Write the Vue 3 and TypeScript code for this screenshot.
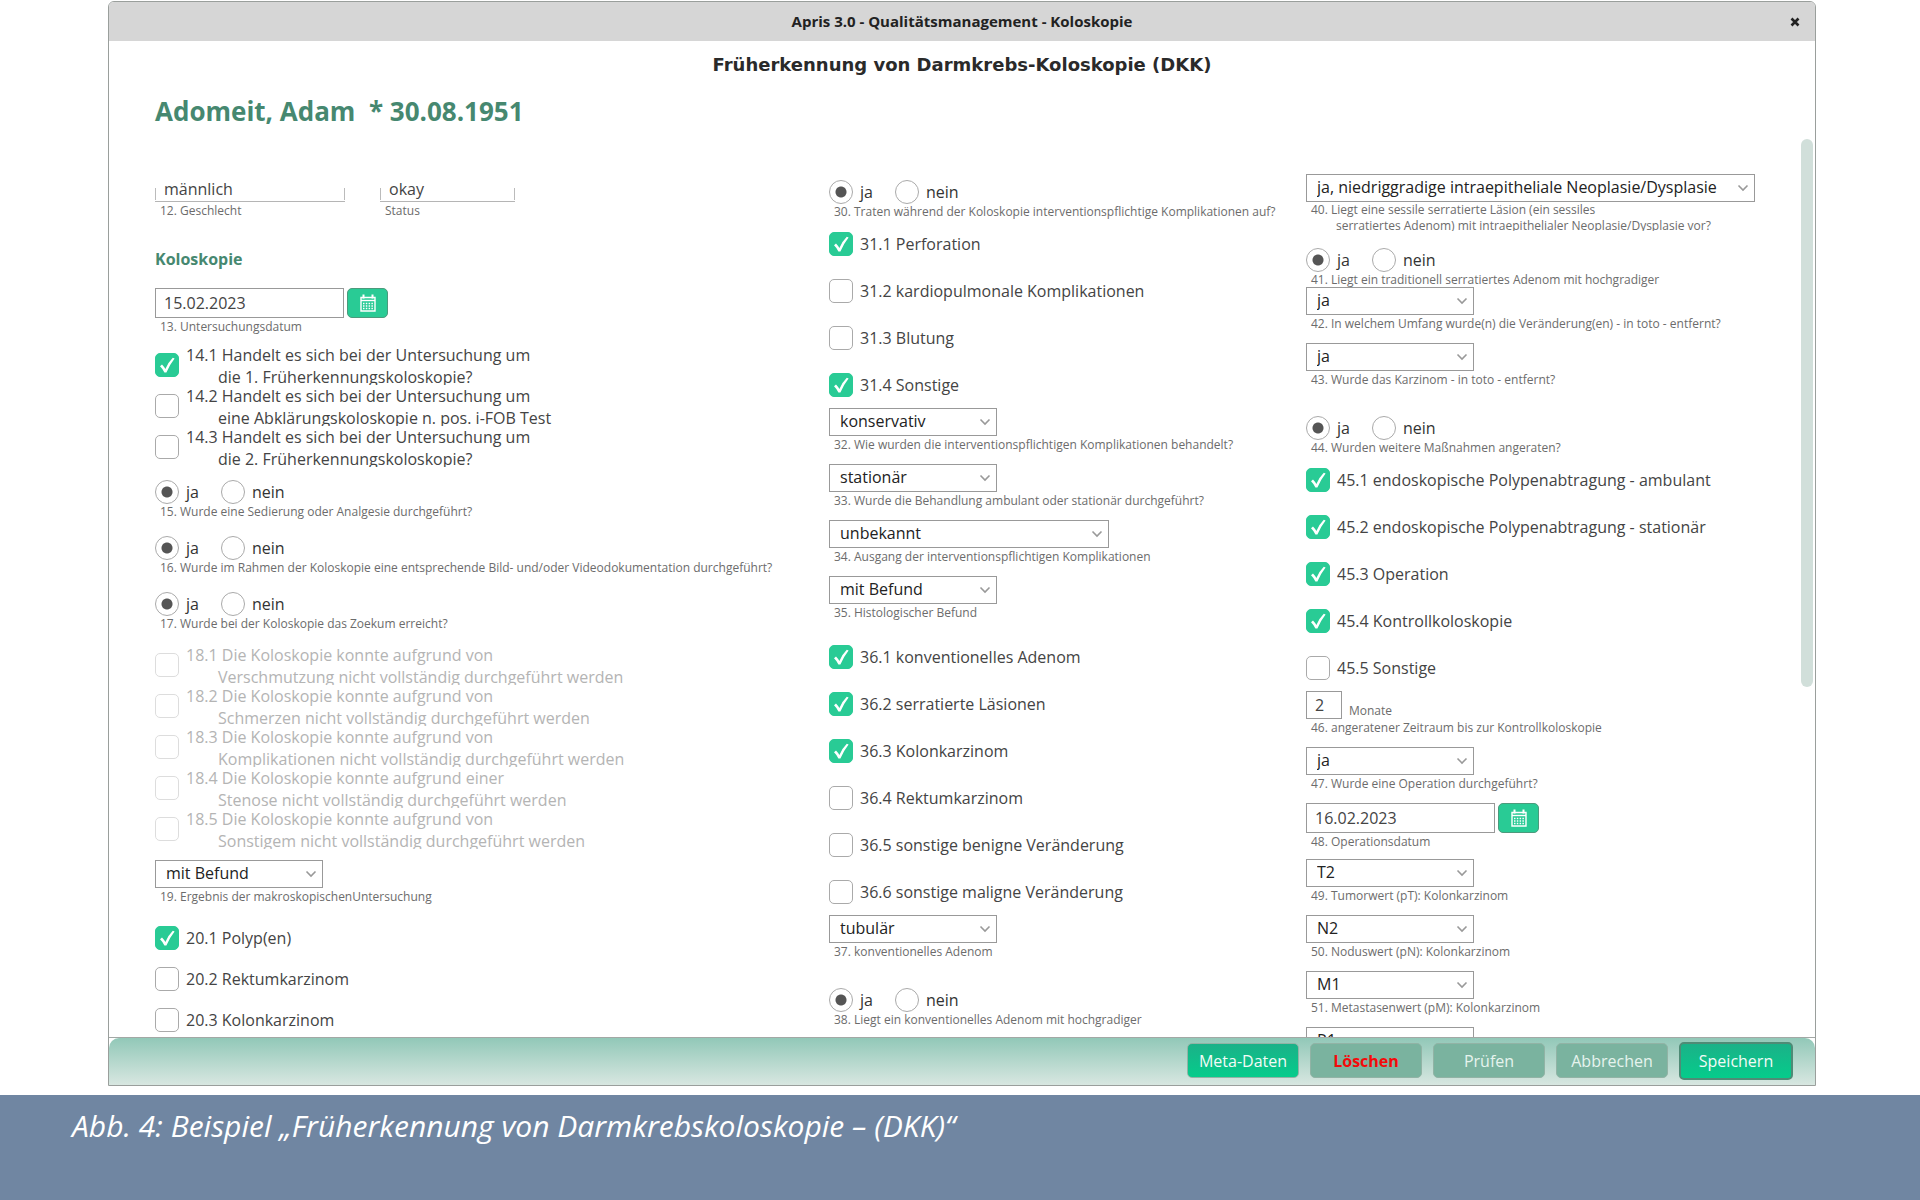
<script setup lang="ts">
import { reactive } from 'vue'

type Space = 'none' | 'xs' | 's' | 'm' | 'l' | 'xl' | '2xl' | '3xl' | '4xl'

interface Item {
  kind: 'status' | 'heading' | 'date' | 'check' | 'radio' | 'select' | 'number'
  id: string
  space: Space
  text?: string
  more?: string
  value?: string
  checked?: boolean
  disabled?: boolean
  size?: 'normal' | 'wide' | 'full'
}

const check = (id: string, space: Space, text: string, checked = false, more = '', disabled = false): Item => ({
  kind: 'check', id, space, text, checked, more, disabled,
})
const radio = (id: string, space: Space, text: string): Item => ({ kind: 'radio', id, space, text, value: 'ja' })
const select = (
  id: string, space: Space, value: string, text: string, size: Item['size'] = 'normal', more = '',
): Item => ({ kind: 'select', id, space, value, text, size, more })
const date = (id: string, space: Space, value: string, text: string): Item => ({ kind: 'date', id, space, value, text })

const columns = reactive<Item[][]>([
  [
    { kind: 'status', id: 'q12', space: 'xs' },
    { kind: 'heading', id: 'koloskopie', space: '4xl', text: 'Koloskopie' },
    date('q13', 'xl', '15.02.2023', '13. Untersuchungsdatum'),
    check('q14-1', 's', '14.1 Handelt es sich bei der Untersuchung um', true, 'die 1. Früherkennungskoloskopie?'),
    check('q14-2', 'none', '14.2 Handelt es sich bei der Untersuchung um', false, 'eine Abklärungskoloskopie n. pos. i-FOB Test'),
    check('q14-3', 'none', '14.3 Handelt es sich bei der Untersuchung um', false, 'die 2. Früherkennungskoloskopie?'),
    radio('q15', 'm', '15. Wurde eine Sedierung oder Analgesie durchgeführt?'),
    radio('q16', 'xl', '16. Wurde im Rahmen der Koloskopie eine entsprechende Bild- und/oder Videodokumentation durchgeführt?'),
    radio('q17', 'xl', '17. Wurde bei der Koloskopie das Zoekum erreicht?'),
    check('q18-1', 'm', '18.1 Die Koloskopie konnte aufgrund von', false, 'Verschmutzung nicht vollständig durchgeführt werden', true),
    check('q18-2', 'none', '18.2 Die Koloskopie konnte aufgrund von', false, 'Schmerzen nicht vollständig durchgeführt werden', true),
    check('q18-3', 'none', '18.3 Die Koloskopie konnte aufgrund von', false, 'Komplikationen nicht vollständig durchgeführt werden', true),
    check('q18-4', 'none', '18.4 Die Koloskopie konnte aufgrund einer', false, 'Stenose nicht vollständig durchgeführt werden', true),
    check('q18-5', 'none', '18.5 Die Koloskopie konnte aufgrund von', false, 'Sonstigem nicht vollständig durchgeführt werden', true),
    select('q19', 's', 'mit Befund', '19. Ergebnis der makroskopischenUntersuchung'),
    check('q20-1', '2xl', '20.1 Polyp(en)', true),
    check('q20-2', 'xl', '20.2 Rektumkarzinom'),
    check('q20-3', 'xl', '20.3 Kolonkarzinom'),
  ],
  [
    radio('q30', 'xs', '30. Traten während der Koloskopie interventionspflichtige Komplikationen auf?'),
    check('q31-1', 'm', '31.1 Perforation', true),
    check('q31-2', '2xl', '31.2 kardiopulmonale Komplikationen'),
    check('q31-3', '2xl', '31.3 Blutung'),
    check('q31-4', '2xl', '31.4 Sonstige', true),
    select('q32', 's', 'konservativ', '32. Wie wurden die interventionspflichtigen Komplikationen behandelt?'),
    select('q33', 'm', 'stationär', '33. Wurde die Behandlung ambulant oder stationär durchgeführt?'),
    select('q34', 'm', 'unbekannt', '34. Ausgang der interventionspflichtigen Komplikationen', 'wide'),
    select('q35', 'm', 'mit Befund', '35. Histologischer Befund'),
    check('q36-1', '3xl', '36.1 konventionelles Adenom', true),
    check('q36-2', '2xl', '36.2 serratierte Läsionen', true),
    check('q36-3', '2xl', '36.3 Kolonkarzinom', true),
    check('q36-4', '2xl', '36.4 Rektumkarzinom'),
    check('q36-5', '2xl', '36.5 sonstige benigne Veränderung'),
    check('q36-6', '2xl', '36.6 sonstige maligne Veränderung'),
    select('q37', 's', 'tubulär', '37. konventionelles Adenom'),
    radio('q38', '4xl', '38. Liegt ein konventionelles Adenom mit hochgradiger'),
  ],
  [
    select('q40', 'none', 'ja, niedriggradige intraepitheliale Neoplasie/Dysplasie', '40. Liegt eine sessile serratierte Läsion (ein sessiles', 'full', 'serratiertes Adenom) mit intraepithelialer Neoplasie/Dysplasie vor?'),
    radio('q41', 'xl', '41. Liegt ein traditionell serratiertes Adenom mit hochgradiger'),
    select('q42', 'none', 'ja', '42. In welchem Umfang wurde(n) die Veränderung(en) - in toto - entfernt?'),
    select('q43', 'm', 'ja', '43. Wurde das Karzinom - in toto - entfernt?'),
    radio('q44', '4xl', '44. Wurden weitere Maßnahmen angeraten?'),
    check('q45-1', 'm', '45.1 endoskopische Polypenabtragung - ambulant', true),
    check('q45-2', '2xl', '45.2 endoskopische Polypenabtragung - stationär', true),
    check('q45-3', '2xl', '45.3 Operation', true),
    check('q45-4', '2xl', '45.4 Kontrollkoloskopie', true),
    check('q45-5', '2xl', '45.5 Sonstige'),
    { kind: 'number', id: 'q46', space: 's', value: '2', text: '46. angeratener Zeitraum bis zur Kontrollkoloskopie' },
    select('q47', 'm', 'ja', '47. Wurde eine Operation durchgeführt?'),
    date('q48', 'm', '16.02.2023', '48. Operationsdatum'),
    select('q49', 's', 'T2', '49. Tumorwert (pT): Kolonkarzinom'),
    select('q50', 'm', 'N2', '50. Noduswert (pN): Kolonkarzinom'),
    select('q51', 'm', 'M1', '51. Metastasenwert (pM): Kolonkarzinom'),
    select('q52', 'm', 'R1', ''),
  ],
])
</script>

<template>
  <div class="page">
    <main class="window">
      <header class="titlebar">
        <span class="titlebar-text">Apris 3.0 - Qualitätsmanagement - Koloskopie</span>
        <button class="close" type="button" aria-label="Schließen">
          <svg width="10" height="10" viewBox="0 0 10 10"><path d="M1.500 1.500L8.500 8.500M8.500 1.500L1.500 8.500" stroke="#222" stroke-width="2.6" /></svg>
        </button>
      </header>

      <h1 class="title">Früherkennung von Darmkrebs-Koloskopie (DKK)</h1>
      <h2 class="patient">Adomeit, Adam&nbsp; * 30.08.1951</h2>

      <div class="scroll">
        <form class="columns" @submit.prevent>
          <div v-for="(column, c) in columns" :key="c" class="column">
            <div v-for="item in column" :key="item.id" :class="['item', 'space-' + item.space]">
              <div v-if="item.kind === 'status'" class="pair">
                <div class="field field-sex">
                  <input id="q12" class="line-input" type="text" value="männlich" />
                  <label class="caption" for="q12">12. Geschlecht</label>
                </div>
                <div class="field field-status">
                  <input id="status" class="line-input" type="text" value="okay" />
                  <label class="caption" for="status">Status</label>
                </div>
              </div>

              <h3 v-else-if="item.kind === 'heading'" class="section">{{ item.text }}</h3>

              <template v-else-if="item.kind === 'date'">
                <div class="date-row">
                  <input :id="item.id" v-model="item.value" class="text-input date-input" type="text" />
                  <button class="calendar" type="button" aria-label="Kalender öffnen">
                    <svg width="16" height="18" viewBox="0 0 16 18" fill="none" stroke="#fff">
                      <path d="M1 3.5H15V17H1Z" stroke-width="1.4" />
                      <path d="M1 6.5H15" stroke-width="1.4" />
                      <path d="M3.5 0.5V4.5M12.5 0.5V4.5" stroke-width="2" />
                      <path d="M3 9.5H13.5M3 12H13.5M3 14.5H13.5" stroke-width="1.3" stroke-dasharray="1.5 1.3" />
                    </svg>
                  </button>
                </div>
                <label class="caption" :for="item.id">{{ item.text }}</label>
              </template>

              <label
                v-else-if="item.kind === 'check'"
                :class="['check', { 'check-double': item.more, 'check-disabled': item.disabled }]"
              >
                <span class="box">
                  <input v-model="item.checked" type="checkbox" :disabled="item.disabled" />
                  <svg v-if="item.checked" class="tick" viewBox="0 0 24 24" fill="#fff">
                    <path d="M5 13.2L7 11.4Q9 13.4 10.4 16Q13 9.6 17.8 4.8L19.6 5.6Q14.6 12 11.4 19.6H9.4Q7.8 15.8 5 13.2Z" />
                  </svg>
                </span>
                <span class="check-text">
                  <span class="line">{{ item.text }}</span>
                  <span v-if="item.more" class="line line-indent">{{ item.more }}</span>
                </span>
              </label>

              <div v-else-if="item.kind === 'radio'" role="radiogroup" :aria-labelledby="item.id">
                <div class="radios">
                  <label class="radio"><input v-model="item.value" type="radio" :name="item.id" value="ja" />ja</label>
                  <label class="radio"><input v-model="item.value" type="radio" :name="item.id" value="nein" />nein</label>
                </div>
                <div :id="item.id" class="caption caption-tight">{{ item.text }}</div>
              </div>

              <template v-else-if="item.kind === 'select'">
                <div :class="['select', 'select-' + item.size]">
                  <select :id="item.id" v-model="item.value">
                    <option>{{ item.value }}</option>
                  </select>
                  <svg class="chevron" width="12" height="8" viewBox="0 0 12 8" fill="none">
                    <path d="M1.5 1.5L6 6L10.500 1.5" stroke="#999" stroke-width="1.6" />
                  </svg>
                </div>
                <label :class="['caption', { 'caption-double': item.more }]" :for="item.id">
                  <span class="line">{{ item.text }}</span>
                  <span v-if="item.more" class="line caption-indent">{{ item.more }}</span>
                </label>
              </template>

              <template v-else>
                <div class="number-row">
                  <input :id="item.id" v-model="item.value" class="text-input number-input" type="text" />
                  <span class="unit">Monate</span>
                </div>
                <label class="caption" :for="item.id">{{ item.text }}</label>
              </template>
            </div>
          </div>
        </form>
        <div class="scrollbar"><div class="thumb"></div></div>
      </div>

      <footer class="actions">
        <div class="actions-bar">
          <button class="btn btn-primary" type="button">Meta-Daten</button>
          <button class="btn btn-danger" type="button">Löschen</button>
          <button class="btn" type="button">Prüfen</button>
          <button class="btn" type="button">Abbrechen</button>
          <button class="btn btn-primary btn-default" type="button">Speichern</button>
        </div>
      </footer>
    </main>

    <p class="figure-caption">Abb. 4: Beispiel „Früherkennung von Darmkrebskoloskopie – (DKK)“</p>
  </div>
</template>

<style>
body {
  margin: 0;
  background: #fff;
}
</style>

<style scoped>
.page {
  display: flex;
  flex-direction: column;
  height: 100vh;
  box-sizing: border-box;
  padding-top: 1px;
  font-family: 'Open Sans', 'Noto Sans', sans-serif;
  font-size: 16px;
  color: #444;
}
.page *,
.page *::before {
  box-sizing: border-box;
}
h1, h2, h3, p {
  margin: 0;
}
button, input, select {
  font: inherit;
  margin: 0;
}

.window {
  flex: 1;
  min-height: 0;
  display: flex;
  flex-direction: column;
  margin: 0 104px 9px 108px;
  border: 1px solid #9a9f9c;
  border-radius: 6px 6px 0 0;
  background: #fff;
  overflow: hidden;
}
.titlebar {
  display: grid;
  grid-template-columns: 40px 1fr 40px;
  align-items: center;
  height: 39px;
  flex: none;
  background: #d6d6d6;
}
.titlebar-text {
  grid-column: 2;
  text-align: center;
  font-size: 15px;
  font-weight: 700;
  line-height: 38px;
  height: 39px;
  color: #222;
}
.close {
  display: grid;
  place-items: center;
  width: 40px;
  height: 38px;
  padding: 0;
  border: 0;
  background: none;
}

.title {
  margin-top: 11px;
  text-align: center;
  font-family: 'DejaVu Sans', sans-serif;
  font-size: 18px;
  line-height: 26px;
  color: #2a2a2a;
}
.patient {
  margin: 15px 0 10px 46px;
  font-size: 26px;
  line-height: 36px;
  color: #468870;
}

.scroll {
  flex: 1;
  min-height: 0;
  display: flex;
  overflow: hidden;
}
.columns {
  flex: 1;
  display: grid;
  grid-template-columns: 674fr 477fr 495fr;
  padding: 35px 0 0 46px;
}
.column {
  min-width: 0;
  white-space: nowrap;
}
.column > .item {
  display: flow-root;
}
.item.space-xs { margin-top: 6px; }
.item.space-s { margin-top: 11px; }
.item.space-m { margin-top: 13px; }
.item.space-l { margin-top: 15px; }
.item.space-xl { margin-top: 17px; }
.item.space-2xl { margin-top: 23px; }
.item.space-3xl { margin-top: 26px; }
.item.space-4xl { margin-top: 30px; }

.scrollbar {
  width: 14px;
  padding-right: 2px;
}
.thumb {
  height: 61%;
  border-radius: 6px;
  background: #d1dfda;
}

.caption {
  display: block;
  height: 15px;
  padding-left: 5px;
  font-size: 12px;
  line-height: 18px;
  color: #6c6c6c;
}
.caption-tight {
  line-height: 16px;
}
.caption-double {
  height: 29px;
  line-height: 16px;
  overflow: hidden;
}
.line {
  display: block;
}
.caption-indent {
  padding-left: 25px;
}

.pair {
  display: flex;
  gap: 35px;
}
.field-sex {
  width: 190px;
}
.field-status {
  width: 135px;
}
.line-input {
  display: block;
  width: 100%;
  height: 22px;
  padding: 0 9px 3px;
  border: 0;
  border-bottom: 1px solid #b5b5b5;
  background:
    linear-gradient(#bbb, #bbb) left 8px / 1px 12px no-repeat,
    linear-gradient(#bbb, #bbb) right 8px / 1px 12px no-repeat;
  color: #444;
}
.section {
  font-size: 16px;
  line-height: 24px;
  color: #468870;
}

.text-input {
  display: block;
  padding: 0 8px;
  border: 1px solid #999;
  border-radius: 0;
  background: #fff;
  color: #444;
}
.date-row {
  display: flex;
  gap: 3px;
}
.date-input {
  width: 189px;
  height: 30px;
}
.calendar {
  display: grid;
  place-items: center;
  width: 41px;
  height: 30px;
  padding: 0;
  border: 1px solid #4c9a7c;
  border-radius: 5px;
  background: #29cb95;
}
.number-row {
  display: flex;
  gap: 7px;
  align-items: flex-end;
}
.number-input {
  width: 36px;
  height: 28px;
}
.unit {
  font-size: 12px;
  line-height: 16px;
  color: #6c6c6c;
}

.check {
  display: flex;
  gap: 7px;
  height: 24px;
  line-height: 24px;
}
.box {
  position: relative;
  flex: none;
  width: 24px;
  height: 24px;
}
.box input {
  display: block;
  appearance: none;
  width: 24px;
  height: 24px;
  border: 1px solid #aaa;
  border-radius: 5px;
  background: #fff;
}
.box input:checked {
  border-color: #29cb95;
  background: #29cb95;
}
.tick {
  position: absolute;
  inset: 0;
  pointer-events: none;
}
.check-double {
  height: 41px;
  line-height: 22px;
  overflow: hidden;
}
.check-double .box {
  margin-top: 9px;
}
.line-indent {
  padding-left: 32px;
}
.check-disabled {
  color: #b4b4b4;
}
.check-disabled .box input {
  border-color: #ddd;
}

.radios {
  display: flex;
  gap: 22px;
}
.radio {
  display: flex;
  gap: 7px;
  height: 24px;
  line-height: 25px;
  color: #333;
}
.radio input {
  appearance: none;
  width: 24px;
  height: 24px;
  border: 1px solid #aaa;
  border-radius: 50%;
  background: #fff;
}
.radio input:checked {
  background: radial-gradient(circle, #555 0 5px, transparent 6px);
}

.select {
  position: relative;
  height: 28px;
}
.select-normal {
  width: 168px;
}
.select-wide {
  width: 280px;
}
.select-full {
  width: 449px;
}
.select select {
  display: block;
  appearance: none;
  width: 100%;
  height: 28px;
  padding: 0 30px 3px 10px;
  border: 1px solid #999;
  border-radius: 0;
  background: #fff;
  color: #222;
}
.chevron {
  position: absolute;
  top: 10px;
  right: 6px;
  pointer-events: none;
}

.actions {
  flex: none;
  border-top: 1px solid #a3a8a5;
}
.actions-bar {
  display: flex;
  justify-content: flex-end;
  align-items: center;
  gap: 11px;
  height: 47px;
  padding: 0 22px 2px 20px;
  border-radius: 10px 10px 0 0;
  background: linear-gradient(#92c8b8, #d8e7e1);
}
.btn {
  width: 112px;
  height: 35px;
  padding: 0;
  border: 1px solid #91b3a5;
  border-radius: 5px;
  background: #7ab39f;
  color: #e6f3ee;
  text-align: center;
}
.btn-danger {
  color: #f40a0a;
  font-weight: 700;
}
.btn-primary {
  background: linear-gradient(#1bb188, #05cc8b);
  color: #f2fbf7;
}
.btn-default {
  width: 114px;
  height: 38px;
  border: 2px solid #4f8b76;
}

.figure-caption {
  flex: none;
  height: 105px;
  padding: 10px 72px;
  background: #7086a2;
  color: #fff;
  font-size: 30px;
  font-style: italic;
  line-height: 42px;
}
</style>
